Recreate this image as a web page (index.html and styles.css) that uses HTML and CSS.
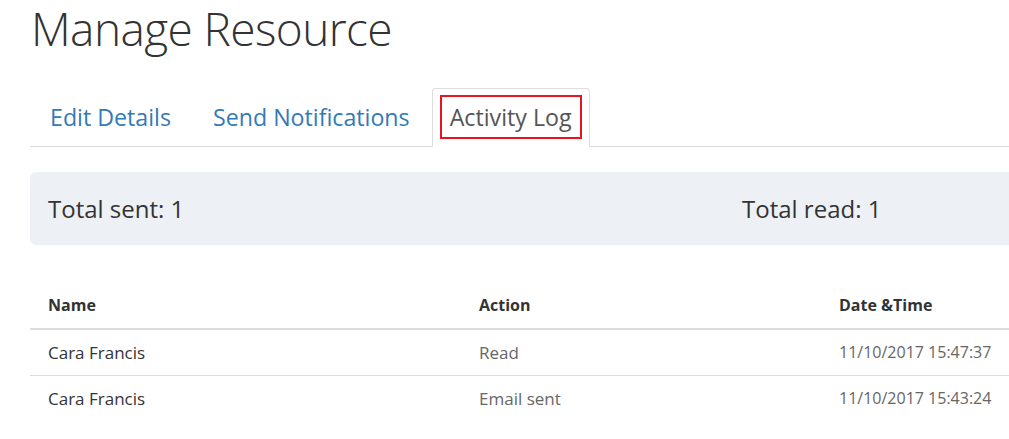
FILE: index.html
```html
<!DOCTYPE html>
<html lang="en">
<head>
<meta charset="utf-8">
<title>Manage Resource</title>
<link rel="stylesheet" href="styles.css">
</head>
<body>
<div class="page">
  <h1 class="title">Manage Resource</h1>
  <ul class="tabs">
    <li class="tab"><a class="tab-link" href="#"><span class="tab-label">Edit Details</span></a></li>
    <li class="tab"><a class="tab-link" href="#"><span class="tab-label">Send Notifications</span></a></li>
    <li class="tab tab-active"><a class="tab-link" href="#"><span class="tab-label">Activity Log</span></a></li>
  </ul>
  <div class="summary">
    <div class="summary-item">Total sent: 1</div>
    <div class="summary-item">Total read: 1</div>
  </div>
  <table class="log">
    <thead>
      <tr><th class="col-name">Name</th><th class="col-action">Action</th><th class="col-date">Date &amp;Time</th></tr>
    </thead>
    <tbody>
      <tr><td class="cell-name">Cara Francis</td><td class="cell-muted">Read</td><td class="cell-muted cell-date">11/10/2017 15:47:37</td></tr>
      <tr><td class="cell-name">Cara Francis</td><td class="cell-muted">Email sent</td><td class="cell-muted cell-date">11/10/2017 15:43:24</td></tr>
    </tbody>
  </table>
</div>
</body>
</html>
```
FILE: styles.css
```css
html, body {
  margin: 0;
  padding: 0;
  background: #ffffff;
}
body {
  font-family: "Open Sans", "Noto Sans", sans-serif;
  color: #333333;
  overflow: hidden;
}
.page {
  padding-left: 30px;
}
.title {
  margin: 0;
  padding-left: 1px;
  font-size: 46px;
  letter-spacing: -0.6px;
  font-weight: 300;
  line-height: 57px;
  color: #333333;
}
.tabs {
  list-style: none;
  margin: 31px 0 0 0;
  padding: 0;
  display: flex;
  align-items: flex-end;
  border-bottom: 1px solid #dddddd;
}
.tab {
  margin: 0 2px -1px 0;
}
.tab-link {
  display: block;
  padding: 6px 17px 7px;
  border: 1px solid transparent;
  border-radius: 4px 4px 0 0;
  text-decoration: none;
  color: #337ab7;
  font-size: 23.2px;
}
.tab-label {
  display: block;
  line-height: 40px;
  border: 2px solid transparent;
}
.tab-active .tab-link {
  padding: 6px 7px 7px;
  border-color: #dddddd #dddddd transparent;
  background: #ffffff;
  color: #555555;
}
.tab-active .tab-label {
  border-color: #e8151f;
  padding: 0 8px;
}
.summary {
  margin-top: 25px;
  height: 73px;
  background: #edf1f5;
  border-radius: 6px 0 0 6px;
  display: grid;
  grid-template-columns: 694px 1fr;
  align-items: center;
  font-size: 24px;
  color: #333333;
}
.summary-item {
  padding-left: 18px;
}
.log {
  margin-top: 38px;
  width: 100%;
  table-layout: fixed;
  border-collapse: collapse;
  font-size: 17px;
  white-space: nowrap;
}
.log th {
  text-align: left;
  font-size: 16px;
  font-weight: 700;
  line-height: 21px;
  padding: 12px 18px;
  border-bottom: 2px solid #dddddd;
  color: #333333;
}
.log td {
  line-height: 21px;
  padding: 12px 18px;
  border-bottom: 1px solid #dddddd;
}
.log tbody tr:last-child td {
  border-bottom: none;
}
.col-name {
  width: 395px;
}
.col-action {
  width: 324px;
}
.cell-name {
  color: #333333;
}
.cell-muted {
  color: #666666;
}
.cell-date {
  font-size: 16px;
}
```
